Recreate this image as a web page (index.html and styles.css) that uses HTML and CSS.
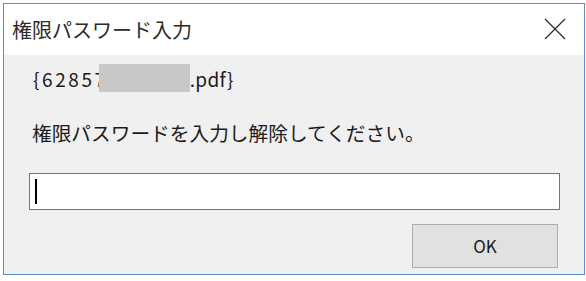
FILE: index.html
```html
<!DOCTYPE html>
<html lang="ja">
<head>
<meta charset="utf-8">
<link rel="stylesheet" href="styles.css">
</head>
<body>
<div class="window">
  <div class="titlebar">
    <span class="title">権限パスワード入力</span>
    <svg class="close" width="22" height="22" viewBox="0 0 22 22"><path d="M1 1 L21 21 M21 1 L1 21" stroke="#2a2a2a" stroke-width="1.2" fill="none"/></svg>
  </div>
  <div class="content">
    <div class="file"><span class="fname">{62857</span><span class="redact"></span><span class="ext">.pdf}</span></div>
    <div class="msg">権限パスワードを入力し解除してください。</div>
    <div class="input"><span class="caret"></span></div>
    <div class="actions"><div class="btn">OK</div></div>
  </div>
</div>
</body>
</html>
```
FILE: styles.css
```css
html, body {
  margin: 0;
  padding: 0;
  background: #ffffff;
}
body {
  width: 586px;
  height: 281px;
  overflow: hidden;
  font-family: "Noto Sans CJK JP", "Noto Sans", sans-serif;
}
.window {
  margin: 3px 0 0 3px;
  width: 582px;
  height: 272px;
  box-sizing: border-box;
  border: 1px solid #5a8fc5;
  display: flex;
  flex-direction: column;
}
.titlebar {
  height: 51px;
  flex: none;
  background: #ffffff;
  display: flex;
  align-items: center;
  justify-content: space-between;
  padding: 0 18px 0 8px;
}
.title {
  font-size: 20px;
  color: #2b2b2b;
}
.close {
  display: block;
  margin-top: -1px;
}
.content {
  flex: 1;
  background: #f0f0f0;
  display: flex;
  flex-direction: column;
  padding: 9px 24px 6px 25px;
}
.file {
  height: 28px;
  display: flex;
  align-items: center;
  font-size: 19px;
  color: #1a1a1a;
  padding-left: 4px;
}
.fname {
  letter-spacing: 2.6px;
}
.ext {
  letter-spacing: 0.3px;
}
.redact {
  width: 91px;
  height: 28px;
  background: #c8c8c8;
  margin-left: -9px;
  flex: none;
}
.msg {
  margin-top: 27px;
  height: 28px;
  line-height: 28px;
  font-size: 19.7px;
  color: #1a1a1a;
  padding-left: 3px;
}
.input {
  margin-top: 26px;
  height: 37px;
  box-sizing: border-box;
  background: #ffffff;
  border: 1px solid #4f7ea8;
  display: flex;
  align-items: center;
  padding-left: 5px;
}
.caret {
  width: 2px;
  height: 25px;
  background: #000;
}
.actions {
  margin-top: 14px;
  display: flex;
  justify-content: flex-end;
  padding-right: 2px;
}
.btn {
  width: 146px;
  height: 44px;
  box-sizing: border-box;
  background: #e1e1e1;
  border: 1px solid #adadad;
  display: flex;
  align-items: center;
  justify-content: center;
  font-size: 17px;
  color: #1a1a1a;
  padding-bottom: 2px;
}
```
